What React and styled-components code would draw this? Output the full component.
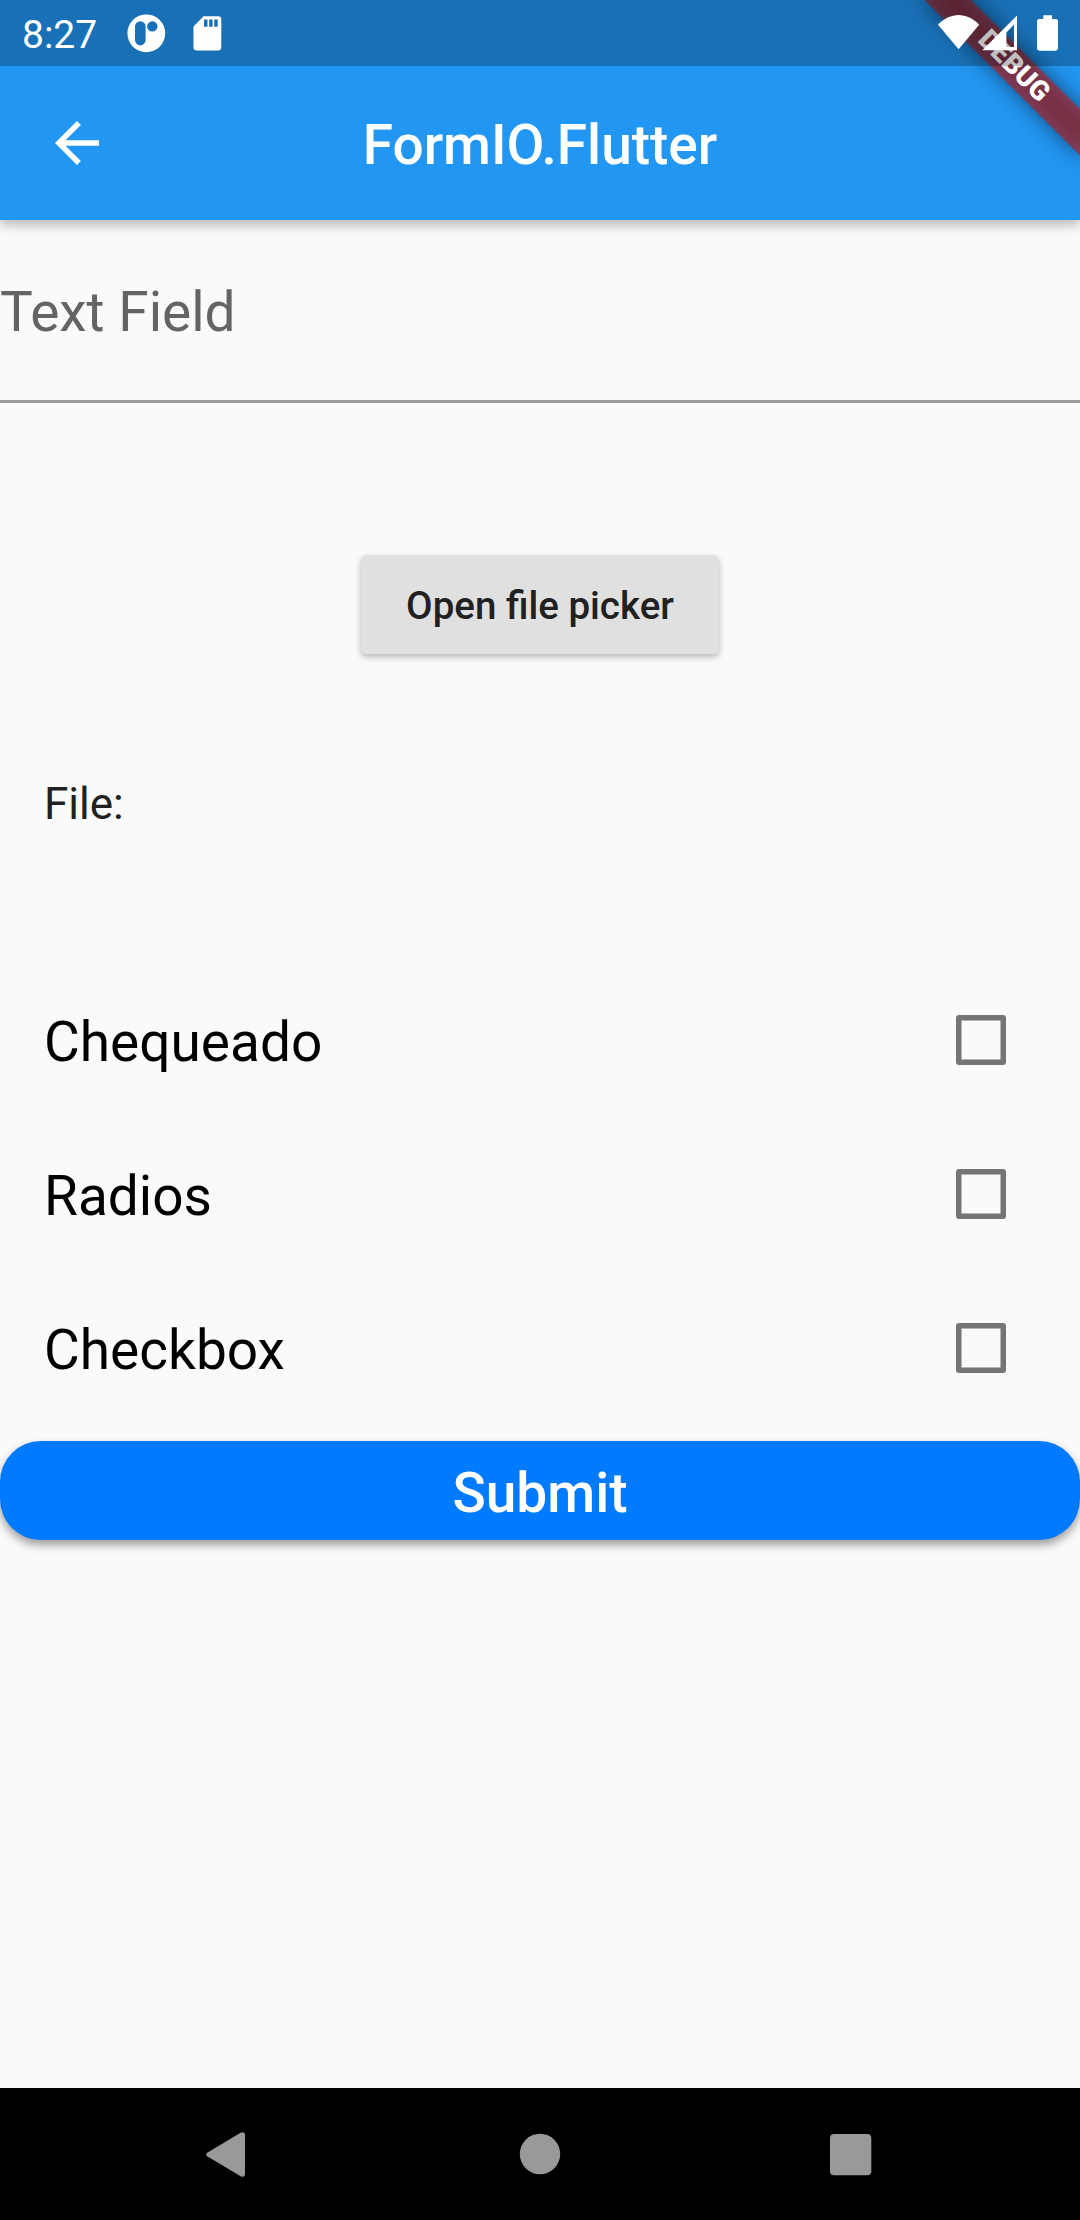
import React from "react";
import styled, { createGlobalStyle } from "styled-components";

const GlobalStyle = createGlobalStyle`
  *, *::before, *::after { box-sizing: border-box; }
  body { margin: 0; background: #fafafa; font-family: Roboto, "Noto Sans", sans-serif; }
  button { font-family: inherit; }
`;

const Screen = styled.div`
  position: relative;
  width: 1080px;
  height: 2220px;
  display: flex;
  flex-direction: column;
  overflow: hidden;
  background: #fafafa;
`;

/* Translucent system bar drawn over the app, debug banner included */
const StatusBar = styled.div`
  position: absolute;
  top: 0;
  left: 0;
  z-index: 3;
  width: 100%;
  height: 66px;
  display: flex;
  align-items: center;
  justify-content: space-between;
  padding: 0 18px 0 22px;
  background: rgba(0, 0, 0, 0.25);
`;

const StatusGroup = styled.div`
  display: flex;
  align-items: center;
`;

const Clock = styled.span`
  width: 91px;
  color: #fff;
  font-size: 39px;
  line-height: 46px;
  padding-top: 3px;
`;

const Glyph = styled.svg`
  display: block;
  flex: none;
`;

const AppBar = styled.header`
  position: relative;
  z-index: 1;
  flex: none;
  height: 220px;
  padding: 66px 44px 0;
  display: grid;
  grid-template-columns: 66px 1fr 66px;
  align-items: center;
  background: #2196f3;
  box-shadow: 0 4px 12px rgba(0, 0, 0, 0.3);
`;

const Title = styled.h1`
  margin: 0;
  padding-top: 3px;
  color: #fff;
  font-size: 55px;
  line-height: 64px;
  font-weight: 500;
  text-align: center;
`;

const IconButton = styled.button`
  width: 66px;
  height: 66px;
  padding: 0;
  border: 0;
  background: none;
  color: #fff;
`;

const BannerFrame = styled.div`
  position: absolute;
  top: 77px;
  left: 970px;
  z-index: 2;
  width: 220px;
  height: 33px;
  transform: rotate(45deg);
  transform-origin: 110px -77px;
`;

const BannerShadow = styled.div`
  position: absolute;
  inset: 0;
  background: rgba(0, 0, 0, 0.5);
  filter: blur(10.9px);
`;

const BannerLabel = styled.div`
  position: relative;
  height: 33px;
  background: rgba(183, 28, 28, 0.627);
  color: #fff;
  font-size: 27.5px;
  line-height: 31px;
  font-weight: 900;
  text-align: center;
`;

const Form = styled.main`
  flex: 1;
  display: flex;
  flex-direction: column;
`;

const Field = styled.label`
  display: flex;
  height: 183px;
  padding-top: 60px;
  border-bottom: 3px solid #9e9e9e;
  color: #646464;
  font-size: 55px;
  line-height: 64px;
`;

const FileSection = styled.section`
  height: 560px;
  padding-top: 152px;
  display: flex;
  flex-direction: column;
`;

const PickerButton = styled.button`
  align-self: center;
  width: 358px;
  height: 99px;
  padding: 2px 0 0;
  border: 0;
  border-radius: 5.5px;
  background: #e0e0e0;
  box-shadow: 0 3px 6px rgba(0, 0, 0, 0.27);
  color: #212121;
  font-size: 38.5px;
  font-weight: 500;
  line-height: 46px;
`;

const FileLabel = styled.p`
  margin: 124px 0 0;
  padding-left: 44px;
  color: #212121;
  font-size: 44px;
  line-height: 52px;
`;

const CheckRow = styled.label`
  height: 154px;
  padding: 0 74px 0 44px;
  display: flex;
  align-items: center;
  justify-content: space-between;
  color: #000;
  font-size: 55px;
  line-height: 64px;
`;

const CheckText = styled.span`
  padding-top: 3px;
`;

const CheckBox = styled.input.attrs({ type: "checkbox" })`
  appearance: none;
  width: 50px;
  height: 50px;
  margin: 0;
  border-radius: 3px;
  box-shadow: inset 0 0 0 5.5px #757575;
`;

const SubmitButton = styled.button`
  width: 100%;
  height: 99px;
  margin-top: 16px;
  padding: 5px 0 0;
  border: 0;
  border-radius: 41px;
  background: #007bff;
  box-shadow: 0 5px 10px rgba(0, 0, 0, 0.38);
  color: #fff;
  font-size: 55px;
  line-height: 64px;
  font-weight: 500;
`;

const NavBar = styled.nav`
  flex: none;
  height: 132px;
  display: grid;
  grid-template-columns: repeat(3, 311px);
  justify-content: center;
  justify-items: center;
  align-items: center;
  background: #000;
  color: #999;
`;

const ArrowBack = () => (
  <Glyph width="66" height="66" viewBox="0 0 24 24" fill="currentColor">
    <path d="M20 11H7.83l5.59-5.59L12 4l-8 8 8 8 1.41-1.41L7.83 13H20v-2z" />
  </Glyph>
);

const AppBadge = () => (
  <Glyph width="66" height="66" viewBox="113 0 66 66">
    <path
      fill="#fff"
      fillRule="evenodd"
      d="M146.3 14.4a18.9 18.9 0 1 0 0 37.8a18.9 18.9 0 1 0 0-37.8ZM140.3 21.2a5.3 5.3 0 0 1 5.3 5.3v13.6a5.3 5.3 0 0 1-10.6 0V26.5a5.3 5.3 0 0 1 5.3-5.3ZM152.3 21.2a5.2 5.2 0 1 1 0 10.4a5.2 5.2 0 1 1 0-10.4Z"
    />
  </Glyph>
);

const SdCard = () => (
  <Glyph width="60" height="66" viewBox="179 0 60 66">
    <path
      fill="#fff"
      fillRule="evenodd"
      d="M203.6 16.3H218a3.3 3.3 0 0 1 3.3 3.3v27.6a3.3 3.3 0 0 1-3.3 3.3h-21.2a3.3 3.3 0 0 1-3.3-3.3V26.6ZM204 19.5v7.2h3.5v-7.2ZM209.1 19.5v7.2h3.5v-7.2ZM214.2 19.5v7.2h3.5v-7.2Z"
    />
  </Glyph>
);

const Wifi = () => (
  <Glyph width="44" height="66" viewBox="937 0 44 66">
    <path
      fill="#fff"
      d="M979.2 24.7C978.4 24 970.3 15.1 958.6 15.1S938.8 24 938 24.7l20.6 24.6Z"
    />
  </Glyph>
);

const Signal = () => (
  <Glyph width="50" height="66" viewBox="981 0 50 66">
    <path
      fill="#fff"
      fillRule="evenodd"
      d="M982.3 50.2H1017V15.5ZM1006.4 32.6V47h7.6V24.5Z"
    />
  </Glyph>
);

const Battery = () => (
  <Glyph width="31" height="66" viewBox="1031 0 31 66">
    <path
      fill="#fff"
      d="M1043.3 15.2h8.7v3.7h3.6a2.4 2.4 0 0 1 2.4 2.4v27a2.4 2.4 0 0 1-2.4 2.4h-16.2a2.4 2.4 0 0 1-2.4-2.4v-27a2.4 2.4 0 0 1 2.4-2.4h3.9Z"
    />
  </Glyph>
);

const NavBack = () => (
  <Glyph width="66" height="66" viewBox="196 2121 66 66" fill="currentColor">
    <path d="M207.2 2152.7L240.6 2132.7Q245 2131 245 2135.5V2173.5Q245 2178 240.6 2176.2L207.2 2156.2Q205.2 2154.5 207.2 2152.7Z" />
  </Glyph>
);

const NavHome = () => (
  <Glyph width="66" height="66" viewBox="0 0 66 66" fill="currentColor">
    <circle cx="33" cy="33" r="20.2" />
  </Glyph>
);

const NavRecents = () => (
  <Glyph width="66" height="66" viewBox="818 2121 66 66" fill="currentColor">
    <rect x="830" y="2134" width="41.3" height="41.3" rx="4" />
  </Glyph>
);

const options = ["Chequeado", "Radios", "Checkbox"];

export default function App() {
  return (
    <>
      <GlobalStyle />
      <Screen>
        <StatusBar>
          <StatusGroup>
            <Clock>8:27</Clock>
            <AppBadge />
            <SdCard />
          </StatusGroup>
          <StatusGroup>
            <Wifi />
            <Signal />
            <Battery />
          </StatusGroup>
        </StatusBar>
        <AppBar>
          <IconButton aria-label="Back">
            <ArrowBack />
          </IconButton>
          <Title>FormIO.Flutter</Title>
        </AppBar>
        <BannerFrame>
          <BannerShadow />
          <BannerLabel>DEBUG</BannerLabel>
        </BannerFrame>
        <Form>
          <Field>Text Field</Field>
          <FileSection>
            <PickerButton>Open file picker</PickerButton>
            <FileLabel>File:</FileLabel>
          </FileSection>
          {options.map((name) => (
            <CheckRow key={name}>
              <CheckText>{name}</CheckText>
              <CheckBox />
            </CheckRow>
          ))}
          <SubmitButton>Submit</SubmitButton>
        </Form>
        <NavBar>
          <NavBack />
          <NavHome />
          <NavRecents />
        </NavBar>
      </Screen>
    </>
  );
}
